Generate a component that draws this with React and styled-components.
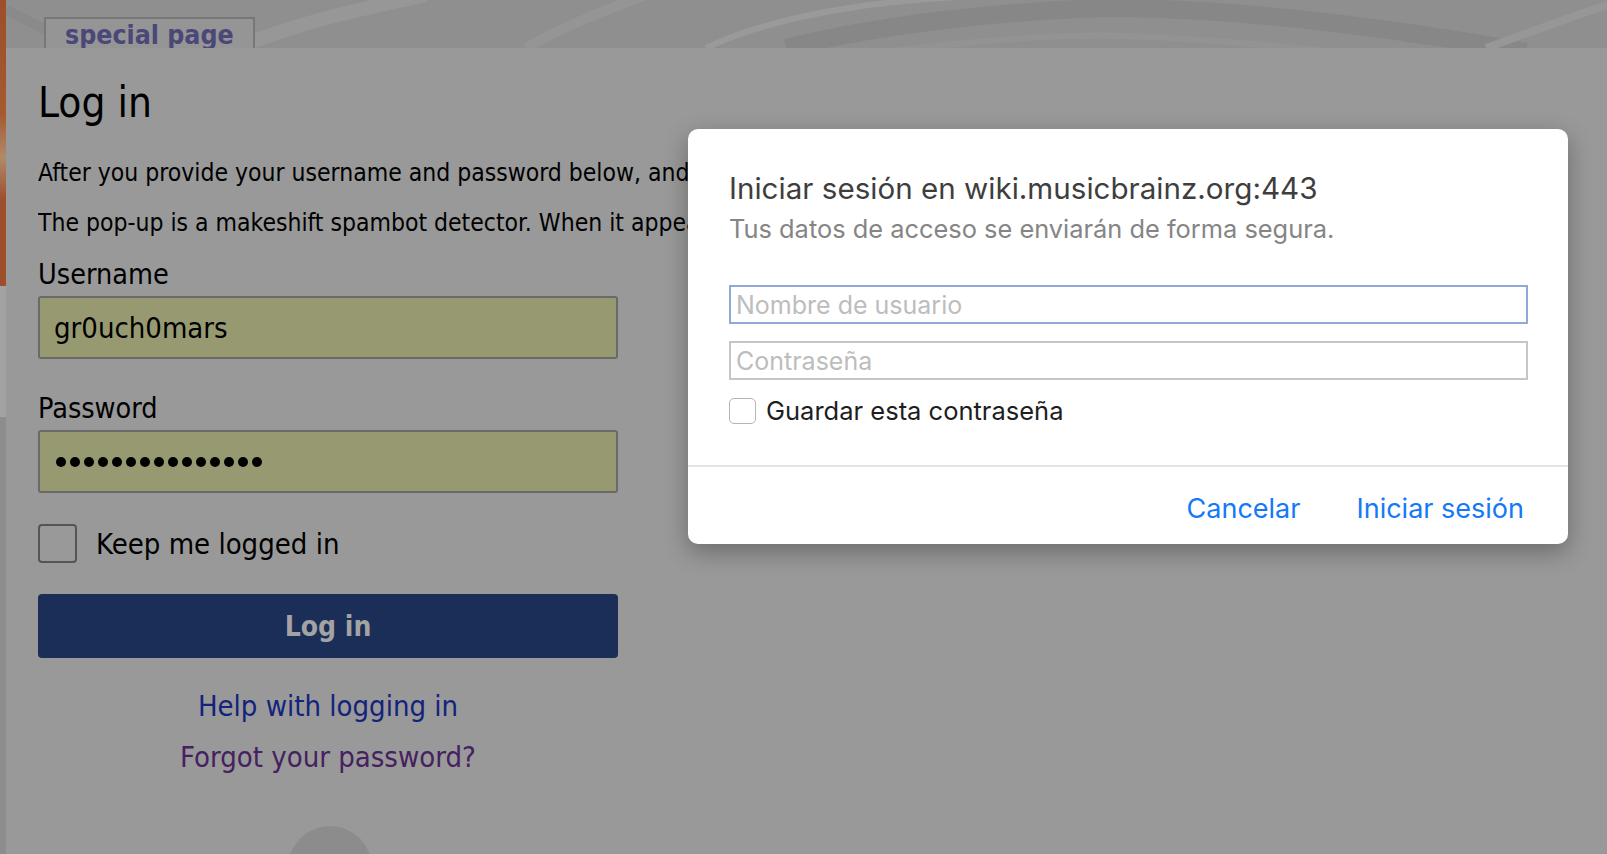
import React from "react";
import styled, { createGlobalStyle } from "styled-components";

const GlobalStyle = createGlobalStyle`
  html, body {
    margin: 0;
    padding: 0;
  }
  body {
    background: #999;
    overflow: hidden;
    font-family: "DejaVu Sans Condensed", "DejaVu Sans", sans-serif;
  }
`;

export default function App() {
  return (
    <>
      <GlobalStyle />
      <Page>
        <LeftStrip>
          <StripPart $h={286} $bg="linear-gradient(180deg, #9c4f2a 0%, #a55a30 40%, #b08a6a 55%, #9c4f2a 70%, #9c4f2a 100%)" />
          <StripPart $h={131} $bg="#a2a2a2" />
          <StripPart $bg="#8d8d8d" />
        </LeftStrip>
        <Main>
          <Header>
            <Swirl viewBox="0 0 1601 48" preserveAspectRatio="none">
              <path d="M0 10 L60 40" stroke="#8a8a8a" strokeWidth="10" fill="none" />
              <path d="M230 48 C300 20 360 8 420 -5" stroke="#979797" strokeWidth="14" fill="none" />
              <path d="M520 48 C560 25 600 10 640 -5" stroke="#959595" strokeWidth="10" fill="none" />
              <path d="M700 48 C780 10 900 -2 980 -4" stroke="#9a9a9a" strokeWidth="6" fill="none" />
              <path d="M780 48 C900 18 1050 8 1120 8 C1250 10 1400 30 1520 52" stroke="#878787" strokeWidth="18" fill="none" />
              <path d="M850 56 C960 40 1060 34 1120 36 C1220 40 1320 50 1400 60" stroke="#939393" strokeWidth="6" fill="none" />
              <path d="M1480 48 C1530 30 1570 15 1601 5" stroke="#979797" strokeWidth="8" fill="none" />
            </Swirl>
            <Tab>special page</Tab>
          </Header>
          <Content>
            <Title>Log in</Title>
            <Para>After you provide your username and password below, and click</Para>
            <Para>The pop-up is a makeshift spambot detector. When it appears</Para>
            <Form>
              <Label>Username</Label>
              <Field>gr0uch0mars</Field>
              <Label $gap={33}>Password</Label>
              <Field>
                <Dots>
                  {Array.from({ length: 15 }).map((_, i) => (
                    <Dot key={i} />
                  ))}
                </Dots>
              </Field>
              <CheckRow>
                <Box />
                <span>Keep me logged in</span>
              </CheckRow>
              <SubmitButton>Log in</SubmitButton>
              <LinkLine $color="#13237c" $gap={31}>Help with logging in</LinkLine>
              <LinkLine $color="#45215f" $gap={17}>Forgot your password?</LinkLine>
            </Form>
            <Bubble />
          </Content>
        </Main>

        <Dialog>
          <DialogBody>
            <DialogTitle>Iniciar sesión en wiki.musicbrainz.org:443</DialogTitle>
            <DialogSub>Tus datos de acceso se enviarán de forma segura.</DialogSub>
            <AuthInput $focused $gap={38}>Nombre de usuario</AuthInput>
            <AuthInput $gap={17}>Contraseña</AuthInput>
            <SaveRow>
              <SmallBox />
              <span>Guardar esta contraseña</span>
            </SaveRow>
          </DialogBody>
          <DialogFooter>
            <FooterButton>Cancelar</FooterButton>
            <FooterButton>Iniciar sesión</FooterButton>
          </DialogFooter>
        </Dialog>
      </Page>
    </>
  );
}

const Page = styled.div`
  position: relative;
  display: flex;
  width: 1607px;
  height: 854px;
  overflow: hidden;
`;

const LeftStrip = styled.div`
  width: 6px;
  flex-shrink: 0;
  display: flex;
  flex-direction: column;
`;

const StripPart = styled.div`
  height: ${(p) => (p.$h ? `${p.$h}px` : "auto")};
  flex: ${(p) => (p.$h ? "0 0 auto" : "1")};
  background: ${(p) => p.$bg};
`;

const Main = styled.div`
  flex: 1;
  display: flex;
  flex-direction: column;
`;

const Header = styled.div`
  position: relative;
  height: 48px;
  background: #8f8f8f;
  display: flex;
  align-items: flex-end;
  padding-left: 38px;
`;

const Swirl = styled.svg`
  position: absolute;
  inset: 0;
  width: 100%;
  height: 100%;
`;

const Tab = styled.div`
  position: relative;
  height: 29px;
  padding: 0 19px;
  border: 2px solid #777;
  border-bottom: none;
  background: #959595;
  color: #4a4878;
  font-weight: bold;
  font-size: 26.5px;
  line-height: 31px;
`;

const Content = styled.div`
  position: relative;
  flex: 1;
  background: #999;
  padding: 34px 32px 0;
`;

const Title = styled.h1`
  margin: 0;
  font-size: 42px;
  font-weight: normal;
  line-height: 42px;
  color: #000;
`;

const Para = styled.p`
  margin: 32px 0 0;
  & + & {
    margin-top: 16px;
  }
  width: 650px;
  white-space: nowrap;
  overflow: hidden;
  font-size: 24.5px;
  line-height: 34px;
  color: #000;
`;

const Form = styled.div`
  width: 580px;
  display: flex;
  flex-direction: column;
`;

const Label = styled.div`
  margin-top: ${(p) => p.$gap ?? 18}px;
  font-size: 28.5px;
  line-height: 34px;
  color: #000;
`;

const Field = styled.div`
  box-sizing: border-box;
  margin-top: 4px;
  height: 63px;
  border: 2px solid #6a6a6a;
  border-radius: 3px;
  background: #979a71;
  padding: 0 14px;
  display: flex;
  align-items: center;
  font-size: 29px;
  color: #000;
`;

const Dots = styled.div`
  display: flex;
  gap: 4px;
  padding-left: 2px;
`;

const Dot = styled.span`
  width: 10px;
  height: 10px;
  border-radius: 50%;
  background: #000;
`;

const CheckRow = styled.div`
  margin-top: 31px;
  height: 39px;
  display: flex;
  align-items: center;
  gap: 19px;
  font-size: 29px;
  color: #000;
`;

const Box = styled.span`
  box-sizing: border-box;
  width: 39px;
  height: 39px;
  border: 2px solid #555;
  border-radius: 4px;
`;

const SubmitButton = styled.div`
  margin-top: 31px;
  height: 64px;
  border-radius: 4px;
  background: #1a2e58;
  color: #a3a3a3;
  font-weight: bold;
  font-size: 28px;
  display: flex;
  align-items: center;
  justify-content: center;
`;

const LinkLine = styled.div`
  margin-top: ${(p) => p.$gap}px;
  text-align: center;
  font-size: 29px;
  line-height: 34px;
  color: ${(p) => p.$color};
`;

const Bubble = styled.div`
  position: absolute;
  left: 282px;
  top: 778px;
  width: 84px;
  height: 84px;
  border-radius: 50%;
  background: #8c8c8c;
`;

const Dialog = styled.div`
  position: absolute;
  left: 688px;
  top: 129px;
  width: 880px;
  height: 415px;
  background: #fff;
  border-radius: 10px;
  box-shadow: 0 8px 24px rgba(0, 0, 0, 0.3);
  display: flex;
  flex-direction: column;
  font-family: Inter, Roboto, sans-serif;
`;

const DialogBody = styled.div`
  box-sizing: border-box;
  padding: 39px 40px 0 41px;
  display: flex;
  flex-direction: column;
  height: 338px;
  border-bottom: 2px solid #e4e4e4;
`;

const DialogTitle = styled.div`
  font-size: 29.6px;
  line-height: 40px;
  color: #3e3e3e;
`;

const DialogSub = styled.div`
  margin-top: 3px;
  font-size: 25.4px;
  line-height: 36px;
  color: #858585;
`;

const AuthInput = styled.div`
  box-sizing: border-box;
  margin-top: ${(p) => p.$gap}px;
  height: 39px;
  border: 2px solid ${(p) => (p.$focused ? "#8fa9d8" : "#c6c6c6")};
  padding: 0 5px;
  display: flex;
  align-items: center;
  font-size: 25px;
  color: #bdbdbd;
`;

const SaveRow = styled.div`
  margin-top: 18px;
  height: 26px;
  display: flex;
  align-items: center;
  gap: 10px;
  font-size: 25.5px;
  line-height: 26px;
  color: #1e1e1e;
`;

const SmallBox = styled.span`
  box-sizing: border-box;
  width: 27px;
  height: 26px;
  border: 1px solid #b5b5b5;
  border-radius: 5px;
`;

const DialogFooter = styled.div`
  flex: 1;
  display: flex;
  justify-content: flex-end;
  align-items: center;
  gap: 56px;
  padding: 5px 44px 0 0;
`;

const FooterButton = styled.span`
  font-size: 27px;
  color: #1479f7;
  cursor: pointer;
`;
